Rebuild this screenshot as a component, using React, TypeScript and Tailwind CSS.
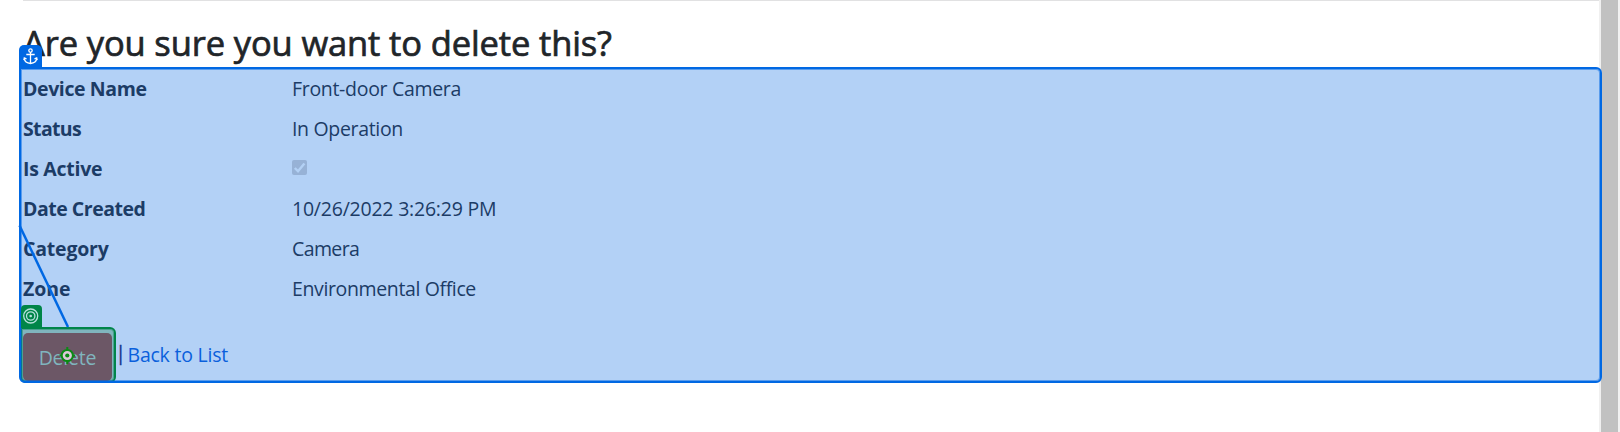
const rows = [
  { label: "Device Name", ls: "tracking-[-0.4px]", value: "Front-door Camera", vs: "tracking-[-0.31px]" },
  { label: "Status", ls: "tracking-[-0.65px]", value: "In Operation", vs: "tracking-[-0.33px]" },
  { label: "Is Active", ls: "tracking-[-0.28px]", value: null, vs: "" },
  { label: "Date Created", ls: "tracking-[-0.48px]", value: "10/26/2022 3:26:29 PM", vs: "tracking-[-0.22px]" },
  { label: "Category", ls: "tracking-[-0.2px]", value: "Camera", vs: "tracking-[-0.6px]" },
  { label: "Zone", ls: "tracking-[-0.07px]", value: "Environmental Office", vs: "tracking-[-0.37px]" },
];

function CheckedBox() {
  return (
    <svg width="15" height="15" viewBox="0 0 15 15" className="relative -top-[1.5px]">
      <rect width="15" height="15" rx="2" fill="#97b2d6" />
      <path d="M2.8 8 6 11.2 12.4 3.4" fill="none" stroke="#b3d1f5" strokeWidth="2.4" />
    </svg>
  );
}

function AnchorBadge() {
  return (
    <div className="absolute top-[45px] left-[19px] flex h-[23px] w-[23px] items-center justify-center rounded-t-[5px] bg-[#0068e3]">
      <svg width="15" height="17" viewBox="0 0 15 17" fill="none" stroke="#fff" strokeWidth="1.3">
        <circle cx="7.5" cy="2.6" r="1.7" />
        <path d="M7.5 4.3V15.5M3.3 6.5h8.4M1.2 10.2C1.6 13.6 4.2 15.3 7.5 15.5 10.8 15.3 13.4 13.6 13.8 10.2M.8 12.2l.5-2.2 2.2.9M14.2 12.2l-.5-2.2-2.2.9" />
      </svg>
    </div>
  );
}

function TargetBadge() {
  return (
    <div className="absolute top-[305px] left-[21px] flex h-[23px] w-[21px] items-center rounded-t-[4px] bg-[#008548] pl-[2px]">
      <svg width="16" height="16" viewBox="0 0 16 16" fill="none" stroke="#b5e0dc" strokeWidth="1.3" className="-mt-px">
        <circle cx="7.7" cy="8" r="7" />
        <circle cx="7.7" cy="8" r="4.2" />
        <circle cx="7.7" cy="8" r="1.3" fill="#b5e0dc" stroke="none" />
      </svg>
    </div>
  );
}

function Connector() {
  return (
    <svg className="absolute top-0 left-0" width="130" height="432" viewBox="0 0 130 432" fill="none">
      <path d="M19.5 225.5 68 327" stroke="#0068e3" strokeWidth="2.5" />
      <path d="M67.3 347v17M59.5 355.5h15.5" stroke="#0b8a14" strokeWidth="2" />
      <circle cx="67.3" cy="355.5" r="5.6" fill="#dcc8d8" stroke="#0b8a14" strokeWidth="2" />
      <circle cx="67.3" cy="355.5" r="2.1" fill="#0b8a14" />
    </svg>
  );
}

export default function App() {
  return (
    <div className="relative flex h-[432px] w-[1620px] overflow-hidden bg-white font-['Open_Sans','Noto_Sans',sans-serif] text-[19.5px] text-[#1c3c66]">
      <div className="absolute top-[67px] left-[19px] h-[316px] w-[1583px] rounded-[6px] bg-[#b3d1f6]" />
      <main className="relative flex-1 pl-[23px]">
        <div className="h-px bg-[#e1e1e2]" />
        <h1 className="mt-[19px] h-[47px] text-[34.5px] leading-[46px] font-medium tracking-[-0.13px] text-[#212529] [-webkit-text-stroke:0.7px_#212529]">
          Are you sure you want to delete this?
        </h1>
        <dl className="mt-[2px]">
          {rows.map((r) => (
            <div key={r.label} className="flex h-10 items-center">
              <dt className={`w-[269px] font-bold ${r.ls}`}>{r.label}</dt>
              <dd className={r.vs}>{r.value ?? <CheckedBox />}</dd>
            </div>
          ))}
        </dl>
        <div className="-ml-[3px] mt-[18px] flex">
          <div className="h-[56px] w-[96px] rounded-[6px] rounded-tl-none border-2 border-[#00854a] bg-[#80b5be] pt-[4px] pl-[1px] shadow-[inset_0_0_0_1px_rgba(0,133,74,0.4)]">
            <button className="block h-[48px] w-[89px] rounded-[5px] bg-[#6c5766] pt-[2px] tracking-[-0.2px] text-[#80b5be]">
              Delete
            </button>
          </div>
          <span className="mt-[16px] ml-[2px] flex h-[20px] w-[5px] shrink-0 justify-center text-[19.5px] leading-[20px] text-[#15378c] [-webkit-text-stroke:0.3px_#15378c]">|</span>
          <a className="mt-[14px] ml-[4.5px] leading-[27px] tracking-[-0.22px] text-[#0a60dc]">Back to List</a>
        </div>
      </main>
      <aside className="flex w-[21px] border-r-2 border-[#f1f1f1] bg-[#c1c1c1]">
        <div className="w-[2px] bg-[#f0f0f0]" />
      </aside>
      <div className="absolute top-[67px] left-[19px] h-[316px] w-[1583px] rounded-[6px] rounded-tl-none border-2 border-[#0068e3] shadow-[inset_0_0_0_1px_rgba(0,104,227,0.5)]" />
      <AnchorBadge />
      <TargetBadge />
      <Connector />
    </div>
  );
}
